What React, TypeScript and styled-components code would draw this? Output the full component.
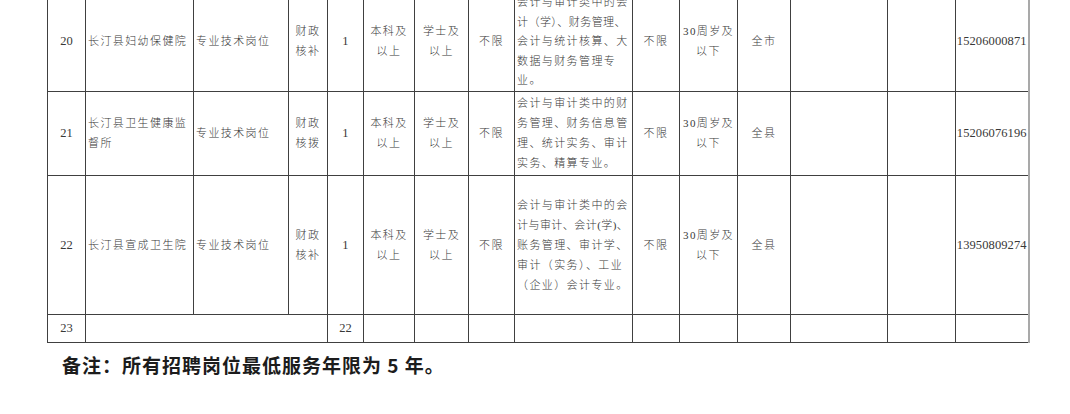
import React from "react";
import styled, { createGlobalStyle } from "styled-components";

const Global = createGlobalStyle`
  html, body { margin: 0; padding: 0; background: #ffffff; }
  body { width: 1070px; height: 414px; overflow: hidden; }
`;

const Page = styled.div`
  padding-left: 47px;
  font-family: "Liberation Serif", "Noto Sans CJK SC", serif;
  color: #383838;
`;

const Table = styled.table`
  border-collapse: collapse;
  table-layout: fixed;
  width: 981px;
  margin-top: -8px;
`;

const Row = styled.tr<{ $h: number; $lh?: number }>`
  height: ${(p) => p.$h}px;
  & > td {
    line-height: ${(p) => p.$lh ?? 20}px;
  }
`;

const Cell = styled.td<{ $align?: "left" | "center"; $last?: boolean; $num?: boolean }>`
  border: 1px solid #404040;
  ${(p) => (p.$last ? "border-right: 2px solid #a9a9a9;" : "")}
  padding: ${(p) => (p.$align === "left" ? "0 0 0 2px" : "0")};
  text-align: ${(p) => p.$align ?? "center"};
  vertical-align: middle;
  font-size: ${(p) => (p.$num ? "12.5px" : "11px")};
  letter-spacing: ${(p) => (p.$num ? "0.1px" : "1.4px")};
  font-weight: 300;
  white-space: nowrap;
  overflow: hidden;
`;

const Line = styled.div<{ $tight?: boolean }>`
  letter-spacing: ${(p) => (p.$tight ? "0.45px" : "inherit")};
`;

const Note = styled.p`
  margin: 8px 0 0 15px;
  font-family: "Noto Sans CJK SC", sans-serif;
  font-weight: 700;
  font-size: 19px;
  letter-spacing: 1px;
  line-height: 28px;
  color: #1c1c1c;
`;

const widths = [38, 108, 95, 39, 36, 51, 54, 46, 118, 47, 58, 53, 97, 68, 73];

type CellVal = string | string[];

const align: ("left" | "center")[] = [
  "center", "left", "left", "center", "center", "center", "center", "center",
  "left", "center", "center", "center", "center", "center", "center",
];

const rows: { h: number; lh?: number; cells: CellVal[] }[] = [
  {
    h: 97,
    lh: 19.5,
    cells: [
      "20",
      "长汀县妇幼保健院",
      "专业技术岗位",
      ["财政", "核补"],
      "1",
      ["本科及", "以上"],
      ["学士及", "以上"],
      "不限",
      ["会计与审计类中的会", "计（学）、财务管理、", "会计与统计核算、大", "数据与财务管理专", "业。"],
      "不限",
      ["30周岁及", "以下"],
      "全市",
      "",
      "",
      "15206000871",
    ],
  },
  {
    h: 84,
    cells: [
      "21",
      ["长汀县卫生健康监", "督所"],
      "专业技术岗位",
      ["财政", "核拨"],
      "1",
      ["本科及", "以上"],
      ["学士及", "以上"],
      "不限",
      ["会计与审计类中的财", "务管理、财务信息管", "理、统计实务、审计", "实务、精算专业。"],
      "不限",
      ["30周岁及", "以下"],
      "全县",
      "",
      "",
      "15206076196",
    ],
  },
  {
    h: 139,
    cells: [
      "22",
      "长汀县宣成卫生院",
      "专业技术岗位",
      ["财政", "核补"],
      "1",
      ["本科及", "以上"],
      ["学士及", "以上"],
      "不限",
      ["会计与审计类中的会", "计与审计、会计(学)、", "账务管理、审计学、", "审计（实务）、工业", "（企业）会计专业。"],
      "不限",
      ["30周岁及", "以下"],
      "全县",
      "",
      "",
      "13950809274",
    ],
  },
];

const numCols = new Set([0, 4, 14]);

const Content = ({ v }: { v: CellVal }) =>
  Array.isArray(v) ? (
    <>
      {v.map((l, i) => (
        <Line key={i} $tight={l.length >= 10}>
          {l}
        </Line>
      ))}
    </>
  ) : (
    <>{v}</>
  );

export default function App() {
  return (
    <>
      <Global />
      <Page>
        <Table>
          <colgroup>
            {widths.map((w, i) => (
              <col key={i} style={{ width: w }} />
            ))}
          </colgroup>
          <tbody>
            {rows.map((r, ri) => (
              <Row key={ri} $h={r.h} $lh={r.lh}>
                {r.cells.map((c, ci) => (
                  <Cell
                    key={ci}
                    $align={align[ci]}
                    $num={numCols.has(ci)}
                    $last={ci === 14}
                  >
                    <Content v={c} />
                  </Cell>
                ))}
              </Row>
            ))}
            <Row $h={28}>
              <Cell $num>23</Cell>
              <Cell colSpan={3} />
              <Cell $num>22</Cell>
              {widths.slice(5).map((_, i) => (
                <Cell key={i} $last={i === 9} />
              ))}
            </Row>
          </tbody>
        </Table>
        <Note>备注：所有招聘岗位最低服务年限为 5 年。</Note>
      </Page>
    </>
  );
}
